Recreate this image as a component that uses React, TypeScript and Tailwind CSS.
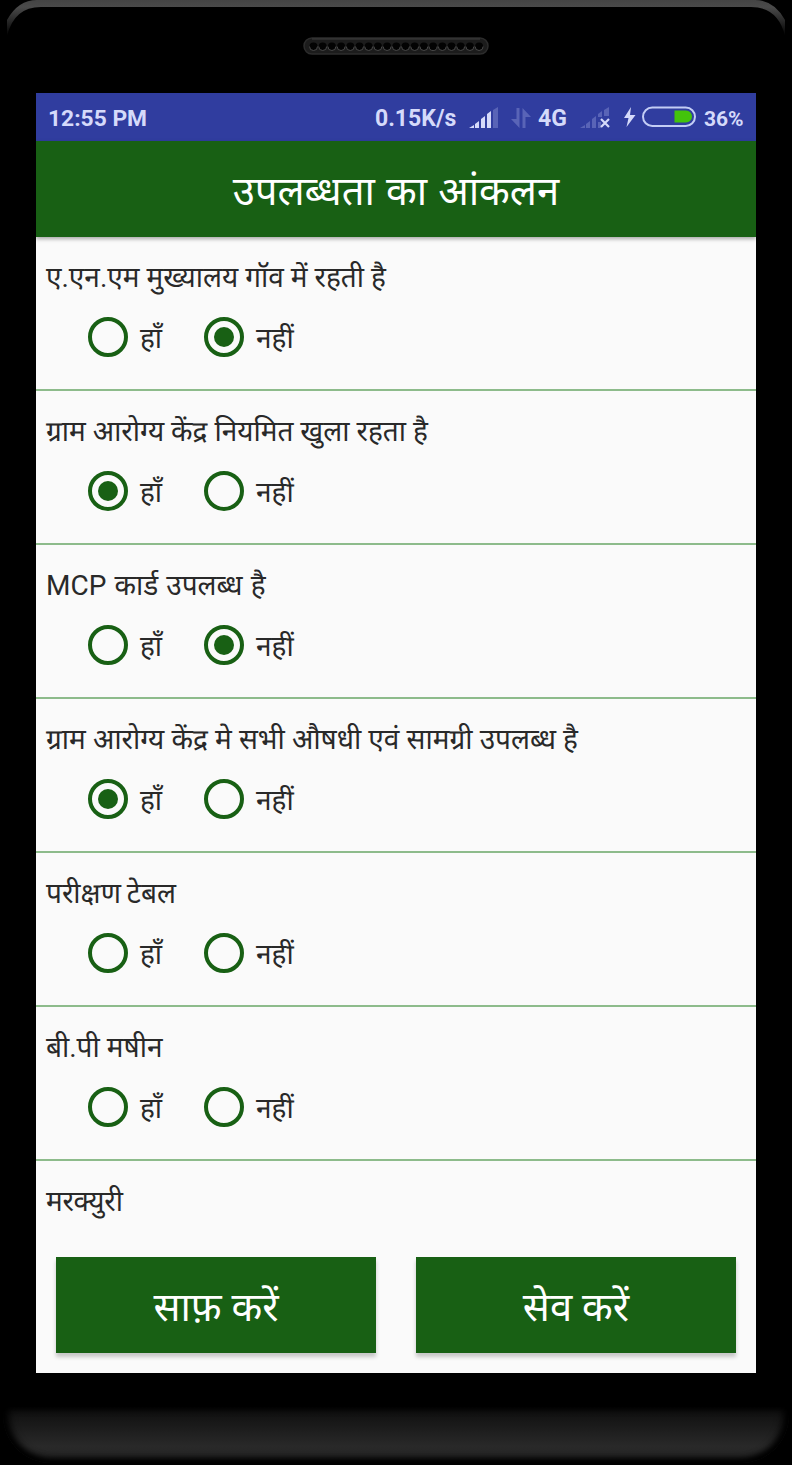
import React from 'react';
import clsx from 'clsx';

type Answer = 'yes' | 'no' | null;

interface Question {
  label: string;
  answer: Answer;
  spacing?: string;
}

const questions: Question[] = [
  { label: 'ए.एन.एम मुख्यालय गॉव में रहती है', answer: 'no' },
  { label: 'ग्राम आरोग्य केंद्र नियमित खुला रहता है', answer: 'yes' },
  { label: 'MCP कार्ड उपलब्ध है', answer: 'no', spacing: '[word-spacing:1.2px]' },
  { label: 'ग्राम आरोग्य केंद्र मे सभी औषधी एवं सामग्री उपलब्ध है', answer: 'yes', spacing: '[word-spacing:0.2px]' },
  { label: 'परीक्षण टेबल', answer: null, spacing: '[word-spacing:-1px]' },
  { label: 'बी.पी मषीन', answer: null },
];

const Speaker: React.FC = () => (
  <svg width="186" height="18" viewBox="0 0 186 18">
    <rect x="1" y="1" width="184" height="16" rx="8" fill="#1c1c1c" stroke="#2c2c2c" strokeWidth="1.5" />
    <path d="M9 2h168" stroke="#3c3c3c" strokeWidth="1" />
    {Array.from({ length: 19 }, (_, i) => (
      <g key={i}>
        <circle cx={10.5 + i * 9.2} cy="9.5" r="4" fill="#030303" />
        <path d={`M${6.5 + i * 9.2} 9.5a4 4 0 0 0 8 0`} fill="none" stroke="#4a4a4a" strokeWidth="1" />
      </g>
    ))}
  </svg>
);

const Rim: React.FC = () => (
  <svg width="792" height="50" viewBox="0 0 792 50" className="absolute top-0 left-0">
    <defs>
      <linearGradient id="rim" x1="0" y1="0" x2="0" y2="1">
        <stop offset="0" stopColor="#444444" />
        <stop offset="0.2" stopColor="#4a4a4a" />
        <stop offset="0.6" stopColor="#262626" />
        <stop offset="1" stopColor="#000000" />
      </linearGradient>
    </defs>
    <path d="M7 36V20Q18 0 37 0H755Q774 0 785 20V36Q778 7 751 7H41Q14 7 7 36z" fill="url(#rim)" />
  </svg>
);

const StatusBar: React.FC = () => (
  <div className="flex h-12 shrink-0 items-center bg-[#303d9f] pl-3 font-[Roboto] text-[23px] leading-[46px] font-bold whitespace-nowrap text-[#d5dafa]">
    <span className="w-[327px] pt-1 text-[22.8px]">12:55 PM</span>
    <span className="w-[94px] pt-1">0.15K/s</span>
    <svg width="30" height="22" viewBox="0 0 30 22" className="mt-[2px] mr-3">
      <path d="M0 21l5-3v3zM6 17l4-3v7H6zM12 12l4-3v12h-4zM18 7l4-3v17h-4z" fill="#d5dafa" />
      <path d="M24 3l5-3v21h-5z" fill="#5964b7" />
    </svg>
    <svg width="20" height="22" viewBox="0 0 20 22" className="mt-[2px] mr-[7px]">
      <path d="M5.5 1h3v20L0 12h5.5zM11.5 21V1L20 10h-5.500v11z" fill="#5964b7" />
    </svg>
    <span className="w-[42px] pt-1">4G</span>
    <svg width="31" height="22" viewBox="0 0 31 22" className="mt-[2px] mr-3">
      <path d="M0 21l5-3v3zM6 17l4-3v7H6zM12 12l4-3v12h-4zM18 7l4-3v6h-4zM18 15h3v6h-3zM24 3l5-3v9h-5z" fill="#5964b7" />
      <path d="M21 12l8 8M29 12l-8 8" stroke="#d5dafa" strokeWidth="2.2" />
    </svg>
    <svg width="13" height="22" viewBox="0 0 13 22" className="mr-[6px]">
      <path d="M8 1L1 12h4.500L3.500 21L12.500 9H7z" fill="#d5dafa" />
    </svg>
    <svg width="54" height="22" viewBox="0 0 54 22" className="mr-2">
      <rect x="1" y="1.5" width="52" height="18.5" rx="9.25" fill="none" stroke="#c3cdf5" strokeWidth="2" />
      <path d="M32.500 4.500H44a6 6 0 0 1 6 6a6 6 0 0 1-6 6H32.500z" fill="#43c30b" />
    </svg>
    <span className="pt-1 text-[21px]">36%</span>
  </div>
);

const Radio: React.FC<{ label: string; checked: boolean }> = ({ label, checked }) => (
  <label className="flex h-10 items-center gap-3 text-[28px] leading-10">
    <span className="flex size-10 items-center justify-center rounded-full border-4 border-[#186014]">
      {checked && <span className="size-5 rounded-full bg-[#186014]" />}
    </span>
    <span className="w-16 pt-[3px]">{label}</span>
  </label>
);

const QuestionRow: React.FC<{ question: Question }> = ({ question }) => (
  <div className="h-[154px] shrink-0 border-b-2 border-[#8dbb8b]">
    <p className={clsx('h-20 pt-[21px] pl-[10px] text-[28px] leading-10 whitespace-nowrap', question.spacing)}>
      {question.label}
    </p>
    <div className="flex pl-[52px]">
      <Radio label="हाँ" checked={question.answer === 'yes'} />
      <Radio label="नहीं" checked={question.answer === 'no'} />
    </div>
  </div>
);

const App: React.FC = () => {
  return (
    <div className="relative flex h-[1465px] w-[792px] flex-col overflow-hidden bg-black">
      <Rim />
      <div className="flex h-[93px] shrink-0 justify-center pt-[37px]">
        <Speaker />
      </div>

      <div className="mx-9 flex h-[1280px] shrink-0 flex-col overflow-hidden bg-[#fafafa] font-[Roboto,'Noto_Sans_Devanagari','Noto_Sans',sans-serif] text-[#292929]">
        <StatusBar />
        <header className="z-10 flex h-24 shrink-0 items-center justify-center bg-[#186014] pt-[5px] text-[40px] whitespace-nowrap text-white shadow-[0_2px_4px_#00000055]">
          <h1 className="[word-spacing:1.2px]">उपलब्धता का आंकलन</h1>
        </header>
        <main className="flex h-[1000px] shrink-0 flex-col overflow-hidden">
          {questions.map((q) => (
            <QuestionRow key={q.label} question={q} />
          ))}
          <p className="pt-[21px] pl-[10px] text-[28px] leading-10 tracking-[-0.3px]">मरक्युरी</p>
        </main>
        <footer className="flex gap-10 px-5 pt-5">
          <button className="h-24 w-80 bg-[#186014] pt-[5px] text-[40px] text-white shadow-[0_4px_4px_#00000035]">साफ़ करें</button>
          <button className="h-24 w-80 bg-[#186014] pt-[5px] text-[40px] text-white shadow-[0_4px_4px_#00000035]">सेव करें</button>
        </footer>
      </div>

      <div className="mt-[34px] h-[56px] shrink-0 overflow-hidden">
        <div className="mx-[3px] h-full rounded-b-[48px] bg-linear-to-b from-[#0e0e0e] via-[#292929] via-70% to-[#222222] shadow-[inset_0_-4px_6px_#000,inset_5px_0_8px_#000,inset_-5px_0_8px_#000]" />
      </div>
    </div>
  );
};

export default App;
